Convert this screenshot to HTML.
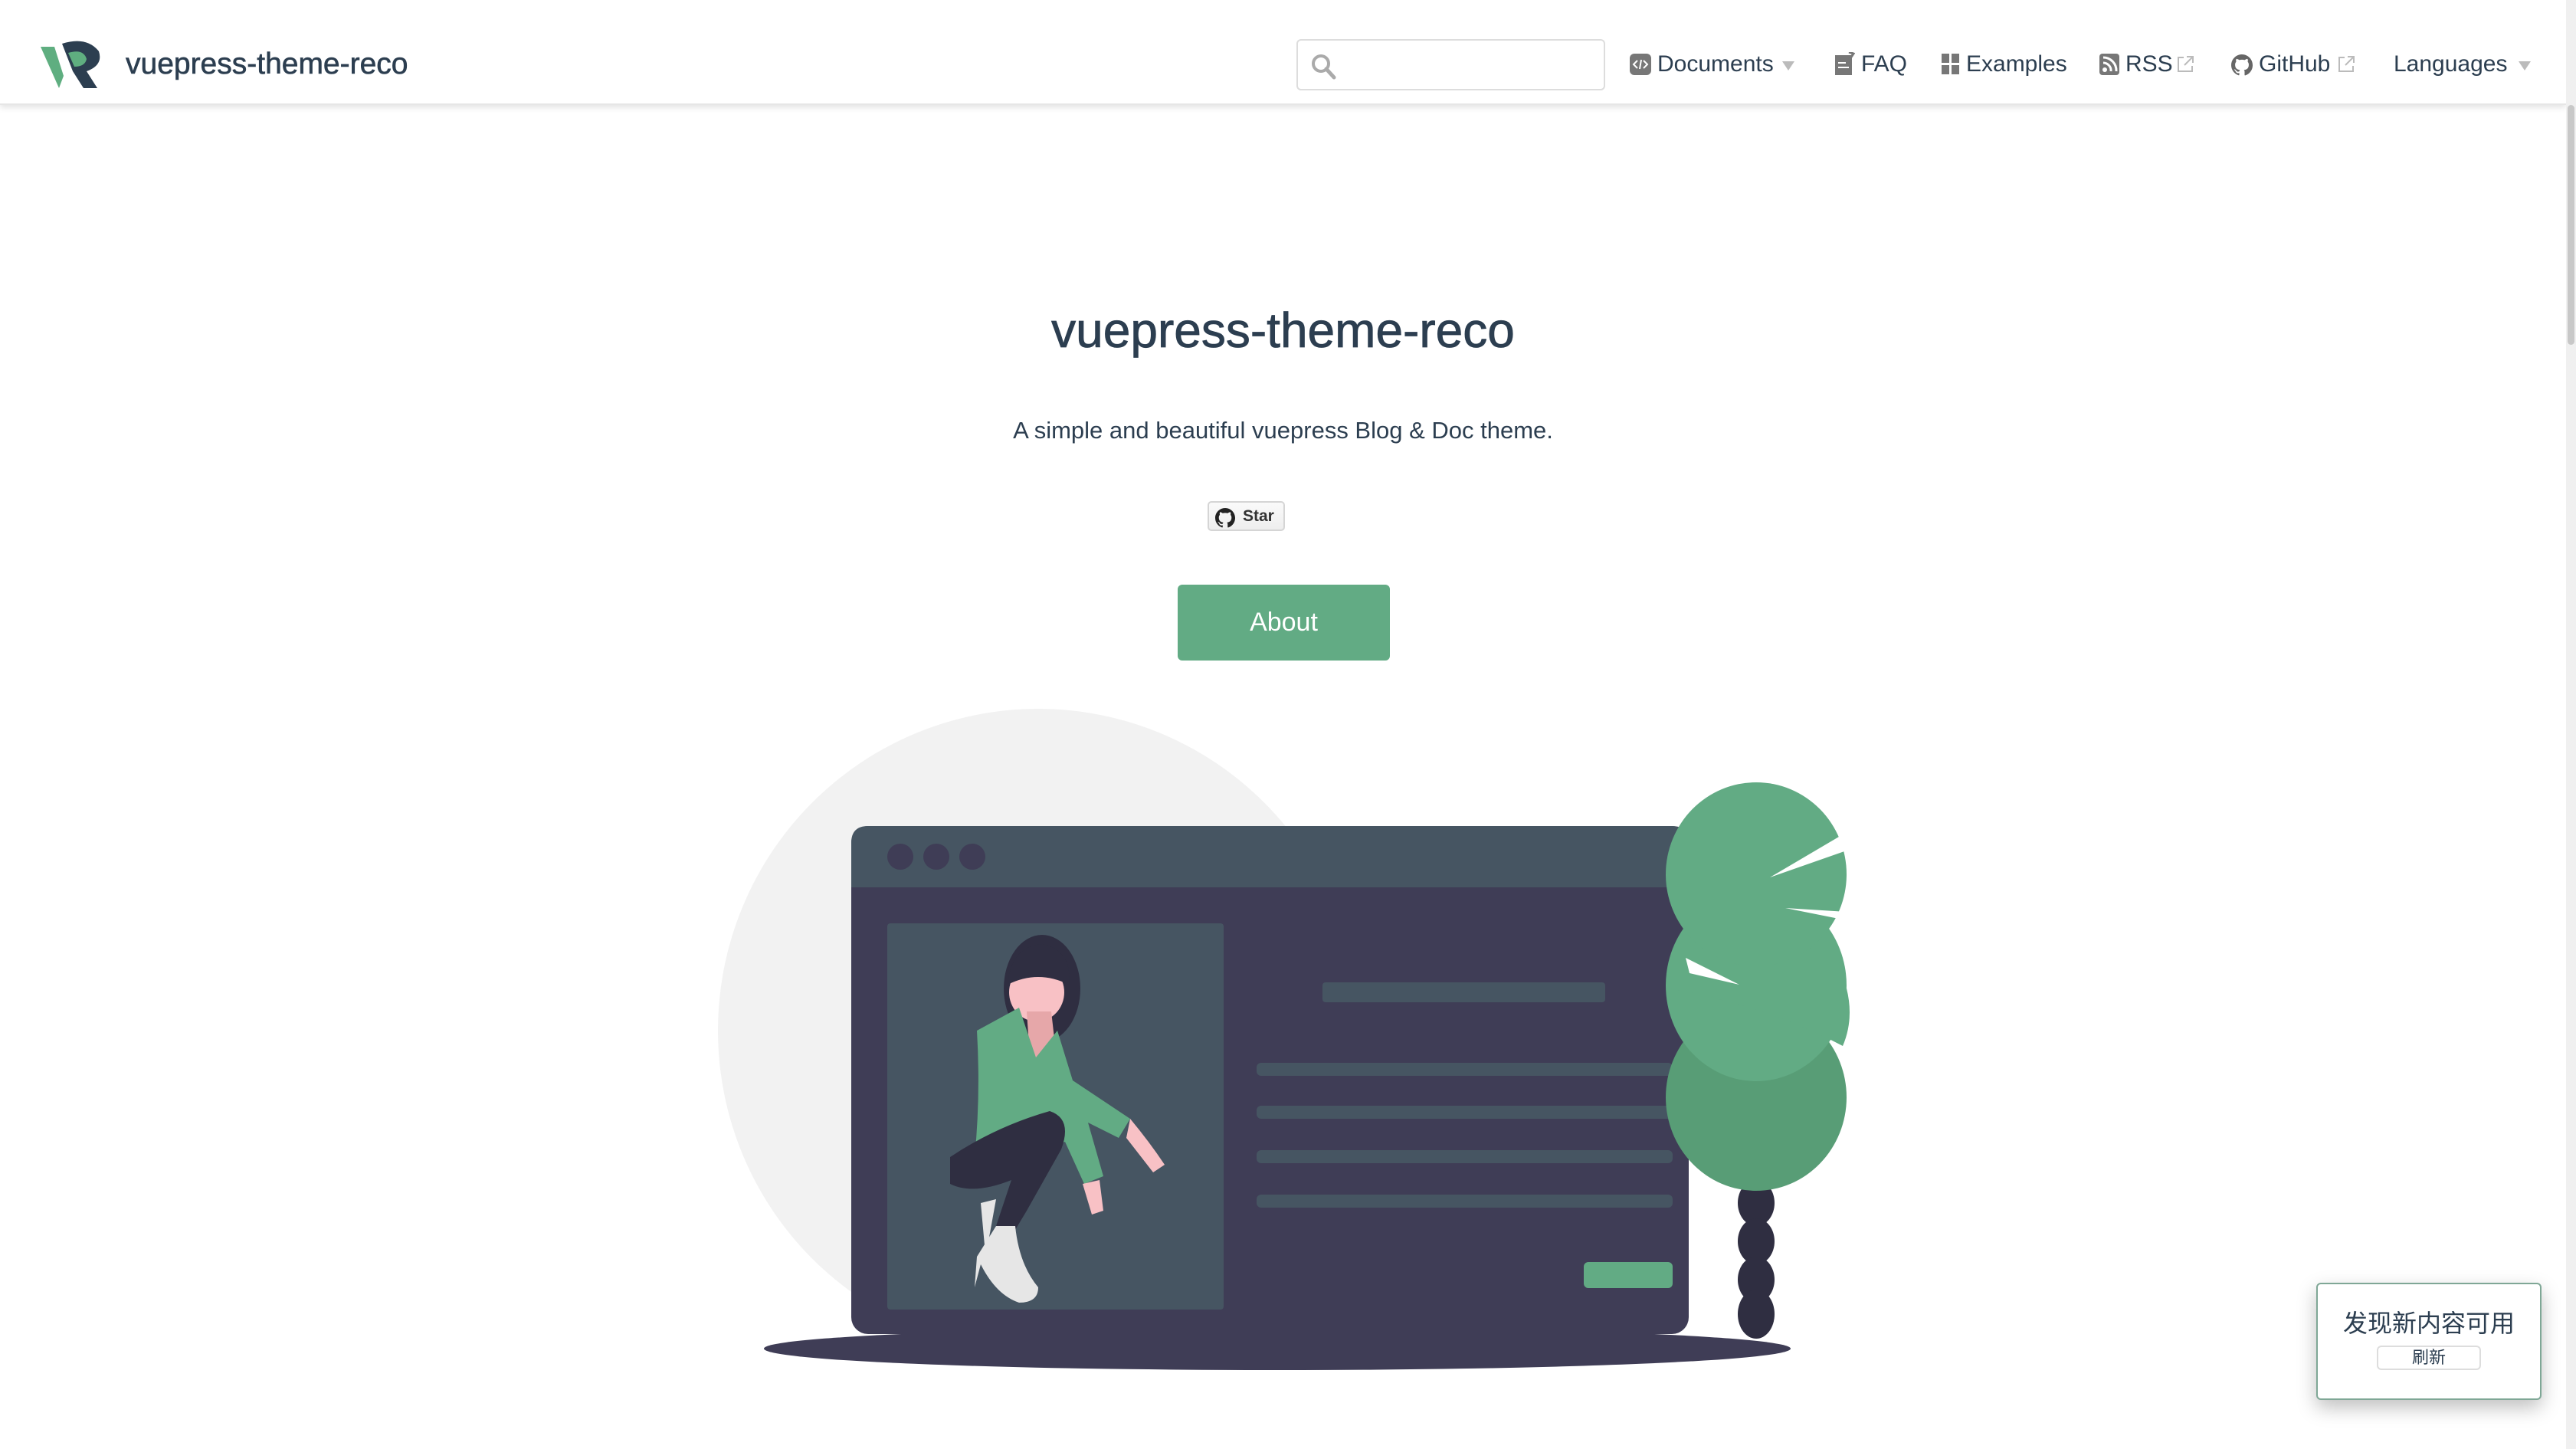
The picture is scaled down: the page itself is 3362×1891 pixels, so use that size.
<!DOCTYPE html>
<html><head><meta charset="utf-8">
<style>
*{margin:0;padding:0;box-sizing:border-box}
html,body{width:3362px;height:1891px;overflow:hidden;background:#fff;font-family:"Liberation Sans","Noto Sans CJK SC",sans-serif;color:#2c3e50}
.hdr{position:absolute;left:0;top:0;width:3349px;height:137px;background:#fff;box-shadow:0 3px 8px rgba(0,0,0,.12);border-bottom:2px solid #e6e6e6}
.brand{position:absolute;left:164px;top:62px;font-size:39px;font-weight:normal;color:#2c3e50;-webkit-text-stroke:0.6px #2c3e50}
.search{position:absolute;left:1692px;top:51px;width:403px;height:67px;border:2px solid #ddd;border-radius:6px}
.nav{position:absolute;top:67px;font-size:30px;color:#2c3e50;white-space:nowrap}
.ico{position:absolute;top:70px}
.sb{position:absolute;left:3349px;top:0;width:13px;height:1891px;background:#f0f0f0}
.sbt{position:absolute;left:3351px;top:137px;width:9px;height:313px;background:#c8c8c8;border-radius:5px}
.t1{position:absolute;left:0;width:3349px;text-align:center}
.star{position:absolute;left:1576px;top:654px;width:101px;height:39px;border:2px solid #d5d5d5;border-radius:5px;background:linear-gradient(#fafafa,#eee);font-size:21px;font-weight:bold;color:#333;padding:6px 0 0 44px}
.about{position:absolute;left:1537px;top:763px;width:277px;height:99px;background:#62ab84;border-radius:6px;color:#fff;font-size:34px;text-align:center;line-height:99px}
.toast{position:absolute;left:3023px;top:1674px;width:294px;height:153px;background:#fff;border:2px solid #7fa796;border-radius:6px;box-shadow:0 10px 25px rgba(0,0,0,.25);text-align:center}
.toast .m{font-size:32px;margin-top:26px;color:#2c3e50}
.toast .b{width:136px;height:32px;margin:8px auto 0;border:2px solid #ddd;border-radius:6px;font-size:22px;line-height:28px}
</style></head><body>
<div class="hdr">
<svg style="position:absolute;left:51px;top:51px" width="82" height="65" viewBox="0 0 82 65">
<path d="M2 10 L20 10 L32 48 L26 64 Z" fill="#5fae80"/>
<path d="M30 6 Q62 -4 78 16 Q84 34 62 42 L76 64 L58 64 L44 42 Z" fill="#2c3e50"/>
<path d="M38 18 Q58 12 62 26 Q60 36 46 36 Z" fill="#5fae80"/>
</svg>
<div class="brand">vuepress-theme-reco</div>
<div class="search"><svg style="position:absolute;left:16px;top:16px" width="36" height="36" viewBox="0 0 36 36"><circle cx="14" cy="14" r="10" fill="none" stroke="#aaa" stroke-width="4"/><path d="M21 21 L31 32" stroke="#aaa" stroke-width="5" stroke-linecap="round"/></svg></div>
<svg class="ico" style="left:2127px" width="28" height="28"><rect width="28" height="28" rx="6" fill="#777"/><path d="M10 9 L5 14 L10 19 M18 9 L23 14 L18 19 M15 8 L13 20" stroke="#fff" stroke-width="2" fill="none"/></svg>
<div class="nav" style="left:2163px">Documents</div>
<svg class="ico" style="left:2326px;top:80px" width="16" height="12"><path d="M0 0 L16 0 L8 12Z" fill="#bbb"/></svg>
<svg class="ico" style="left:2395px;top:68px" width="26" height="30"><rect y="4" width="22" height="26" fill="#777"/><path d="M4 14 H14 M4 20 H18" stroke="#fff" stroke-width="2"/><path d="M18 0 L24 2 L16 14" stroke="#777" stroke-width="3" fill="none"/></svg>
<div class="nav" style="left:2429px">FAQ</div>
<svg class="ico" style="left:2534px" width="24" height="28"><rect width="10" height="12" fill="#777"/><rect x="13" width="10" height="12" fill="#777"/><rect y="15" width="10" height="12" fill="#777"/><rect x="13" y="15" width="10" height="12" fill="#777"/></svg>
<div class="nav" style="left:2566px">Examples</div>
<svg class="ico" style="left:2740px" width="26" height="28"><rect width="26" height="28" rx="4" fill="#777"/><circle cx="7" cy="21" r="3" fill="#fff"/><path d="M5 12 A10 10 0 0 1 15 23 M5 5 A17 17 0 0 1 22 23" stroke="#fff" stroke-width="3" fill="none"/></svg>
<div class="nav" style="left:2774px">RSS</div>
<svg class="ico" style="left:2840px;top:72px" width="24" height="24"><path d="M10 3 H3 V21 H21 V14" stroke="#bbb" stroke-width="2" fill="none"/><path d="M14 2 H22 V10 M22 2 L11 13" stroke="#bbb" stroke-width="2" fill="none"/></svg>
<svg class="ico" style="left:2912px" width="28" height="30" viewBox="0 0 16 16"><path fill="#666" d="M8 0C3.58 0 0 3.58 0 8c0 3.54 2.29 6.53 5.470 7.59.4.07.55-.17.55-.38v-1.33c-2.23.48-2.7-1.07-2.7-1.07-.36-.92-.89-1.17-.89-1.17-.73-.5.06-.49.06-.49.8.06 1.23.83 1.23.83.72 1.23 1.87.87 2.33.67.07-.52.28-.87.5-1.07-1.78-.2-3.64-.89-3.64-3.95 0-.87.31-1.59.82-2.15-.08-.2-.36-1.02.08-2.12 0 0 .67-.21 2.2.82a7.7 7.7 0 0 1 4 0c1.53-1.04 2.2-.82 2.2-.82.44 1.1.16 1.92.08 2.12.51.56.82 1.27.82 2.15 0 3.07-1.87 3.75-3.65 3.95.29.25.54.73.54 1.48v2.2c0 .21.15.46.55.38A8.01 8.01 0 0 0 16 8c0-4.42-3.58-8-8-8z"/></svg>
<div class="nav" style="left:2948px">GitHub</div>
<svg class="ico" style="left:3050px;top:72px" width="24" height="24"><path d="M10 3 H3 V21 H21 V14" stroke="#bbb" stroke-width="2" fill="none"/><path d="M14 2 H22 V10 M22 2 L11 13" stroke="#bbb" stroke-width="2" fill="none"/></svg>
<div class="nav" style="left:3124px">Languages</div>
<svg class="ico" style="left:3287px;top:80px" width="16" height="12"><path d="M0 0 L16 0 L8 12Z" fill="#bbb"/></svg>
</div>
<div class="sb"></div><div class="sbt"></div>

<div class="t1" style="top:394px;font-size:64px;color:#2c3e50;-webkit-text-stroke:0.8px #2c3e50">vuepress-theme-reco</div>
<div class="t1" style="top:544px;font-size:31px;color:#2c3e50">A simple and beautiful vuepress Blog &amp; Doc theme.</div>
<div class="star"><svg style="position:absolute;left:8px;top:7px" width="26" height="26" viewBox="0 0 16 16"><path fill="#222" d="M8 0C3.58 0 0 3.58 0 8c0 3.54 2.29 6.53 5.47 7.59.4.07.55-.17.55-.38v-1.33c-2.23.48-2.7-1.07-2.7-1.07-.36-.92-.89-1.17-.89-1.17-.73-.5.06-.49.06-.49.8.06 1.23.83 1.23.83.72 1.23 1.87.87 2.33.67.07-.52.28-.87.5-1.07-1.78-.2-3.64-.89-3.64-3.95 0-.87.31-1.59.82-2.15-.08-.2-.36-1.02.08-2.12 0 0 .67-.21 2.2.82a7.7 7.7 0 0 1 4 0c1.53-1.04 2.2-.82 2.2-.82.44 1.1.16 1.92.08 2.12.51.56.82 1.27.82 2.15 0 3.07-1.87 3.75-3.65 3.95.29.25.54.73.54 1.48v2.2c0 .21.15.46.55.38A8.01 8.01 0 0 0 16 8c0-4.42-3.58-8-8-8z"/></svg>Star</div>
<div class="about">About</div>

<svg style="position:absolute;left:0;top:0" width="3362" height="1891" viewBox="0 0 3362 1891">
<ellipse cx="1355" cy="1345" rx="418" ry="420" fill="#f2f2f2"/>
<ellipse cx="1667" cy="1760" rx="670" ry="28" fill="#3f3d56"/>
<rect x="1111" y="1078" width="1093" height="663" rx="22" fill="#3f3d56"/>
<path d="M1133 1078 H2182 Q2204 1078 2204 1100 V1158 H1111 V1100 Q1111 1078 1133 1078Z" fill="#465562"/>
<circle cx="1175" cy="1118" r="17" fill="#3f3d56"/><circle cx="1222" cy="1118" r="17" fill="#3f3d56"/><circle cx="1269" cy="1118" r="17" fill="#3f3d56"/>
<rect x="1158" y="1205" width="439" height="504" rx="4" fill="#465562"/>
<rect x="1726" y="1282" width="369" height="26" rx="4" fill="#465562"/>
<rect x="1640" y="1387" width="543" height="17" rx="6" fill="#465562"/>
<rect x="1640" y="1443" width="543" height="17" rx="6" fill="#465562"/>
<rect x="1640" y="1501" width="543" height="17" rx="6" fill="#465562"/>
<rect x="1640" y="1559" width="543" height="17" rx="6" fill="#465562"/>
<rect x="2067" y="1647" width="116" height="34" rx="6" fill="#62ab84"/>
<ellipse cx="1360" cy="1290" rx="50" ry="70" fill="#2f2e41"/>
<path d="M1325 1300 Q1305 1360 1330 1370 L1350 1320Z" fill="#2f2e41"/>
<ellipse cx="1353" cy="1295" rx="36" ry="38" fill="#f8c1c5"/>
<path d="M1315 1285 Q1320 1235 1360 1232 Q1400 1240 1395 1285 Q1355 1265 1315 1285Z" fill="#2f2e41"/>
<path d="M1340 1320 L1372 1320 L1380 1390 L1345 1395Z" fill="#e6a7a9"/>
<path d="M1275 1345 L1330 1315 L1352 1380 L1380 1345 L1400 1410 L1475 1460 L1460 1485 L1420 1465 L1440 1535 L1415 1545 L1390 1490 L1300 1520 L1272 1510 Q1280 1430 1275 1345Z" fill="#62ab84"/>
<path d="M1475 1460 Q1500 1490 1520 1520 L1505 1530 L1470 1485Z" fill="#f8c1c5"/>
<path d="M1413 1545 L1435 1540 L1440 1580 L1425 1585Z" fill="#f8c1c5"/>
<path d="M1240 1510 Q1300 1470 1370 1450 Q1400 1460 1385 1500 L1340 1580 L1325 1605 L1300 1600 L1320 1540 Q1270 1560 1240 1545Z" fill="#2f2e41"/>
<path d="M1280 1570 L1300 1565 L1290 1620 L1285 1625Z" fill="#e6e6e6"/>
<path d="M1300 1600 L1325 1600 Q1330 1650 1355 1680 Q1355 1700 1330 1700 Q1300 1690 1280 1650 L1272 1680 L1275 1640Z" fill="#e6e6e6"/>
<g fill="#2f2e41">
<ellipse cx="2292" cy="1570" rx="24" ry="30"/><ellipse cx="2292" cy="1620" rx="24" ry="30"/><ellipse cx="2292" cy="1670" rx="24" ry="30"/><ellipse cx="2292" cy="1715" rx="24" ry="32"/>
</g>
<ellipse cx="2292" cy="1432" rx="118" ry="122" fill="#589d76"/>
<ellipse cx="2292" cy="1286" rx="118" ry="125" fill="#62ab84"/>
<path d="M2176 1290 Q2300 1310 2405 1365 Q2420 1330 2410 1290Z" fill="#62ab84"/>
<ellipse cx="2292" cy="1141" rx="118" ry="120" fill="#62ab84"/>
<path d="M2310 1145 L2400 1092 L2410 1110Z" fill="#fff"/>
<path d="M2330 1185 L2410 1190 L2405 1200Z" fill="#fff"/>
<path d="M2200 1250 L2270 1285 L2205 1270Z" fill="#fff"/>
</svg>

<div class="toast"><div class="m">发现新内容可用</div><div class="b">刷新</div></div>
</body></html>
